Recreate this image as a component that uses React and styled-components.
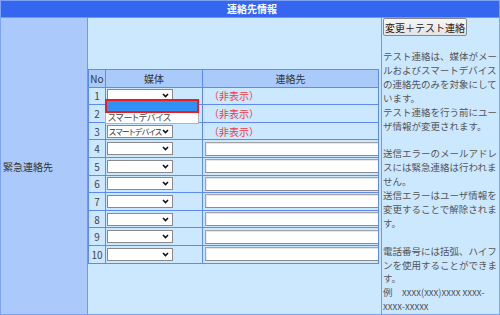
import React from 'react'
import styled, { createGlobalStyle } from 'styled-components'

const GlobalStyle = createGlobalStyle`
	html, body {
		margin: 0;
		padding: 0;
		background: #ffffff;
	}
	body {
		font-family: 'Noto Sans CJK JP', 'Noto Sans', sans-serif;
		font-size: 10px;
	}
`

const rows = [
	{ no: 1, media: '', hidden: true },
	{ no: 2, media: '', hidden: true },
	{ no: 3, media: 'スマートデバイス', hidden: true },
	{ no: 4 },
	{ no: 5 },
	{ no: 6 },
	{ no: 7 },
	{ no: 8 },
	{ no: 9 },
	{ no: 10 },
]

const notes = [
	'テスト連絡は、媒体がメールおよびスマートデバイスの連絡先のみを対象にしています。',
	'テスト連絡を行う前にユーザ情報が変更されます。',
	null,
	'送信エラーのメールアドレスには緊急連絡は行われません。',
	'送信エラーはユーザ情報を変更することで解除されます。',
	null,
	'電話番号には括弧、ハイフンを使用することができます。',
	'例　xxxx(xxx)xxxx xxxx-xxxx-xxxxx',
]

const Chevron = () => (
	<ChevronIcon width="7" height="5" viewBox="0 0 7 5">
		<polyline points="1,1 3.5,3.5 6,1" fill="none" stroke="#111" strokeWidth="1.6" />
	</ChevronIcon>
)

const App = () => {
	return (
		<>
			<GlobalStyle />
			<Frame>
				<Title>連絡先情報</Title>
				<Label>緊急連絡先</Label>
				<Middle>
					<TableWrap>
						<ContactTable>
							<colgroup>
								<col style={{ width: 17 }} />
								<col style={{ width: 97 }} />
								<col />
							</colgroup>
							<thead>
								<tr>
									<Th>No</Th>
									<Th>媒体</Th>
									<Th>連絡先</Th>
								</tr>
							</thead>
							<tbody>
								{rows.map((row) => (
									<tr key={`contact-row-${row.no}`}>
										<NoCell>{row.no}</NoCell>
										<Td>
											<SelectBox>
												<SelectText>{row.media}</SelectText>
												<Chevron />
											</SelectBox>
										</Td>
										<Td>
											{row.hidden ? (
												<Hidden>（非表示）</Hidden>
											) : (
												<TextInput type="text" readOnly />
											)}
										</Td>
									</tr>
								))}
							</tbody>
						</ContactTable>
						<DropList>
							<Option $active />
							<Option>スマートデバイス</Option>
						</DropList>
					</TableWrap>
				</Middle>
				<Side>
					<Button>変更＋テスト連絡</Button>
					<Notes>
						{notes.map((note, key) =>
							note ? <p key={`note-${key}`}>{note}</p> : <Gap key={`note-${key}`} />
						)}
					</Notes>
				</Side>
			</Frame>
		</>
	)
}

const Frame = styled.div`
	width: 500px;
	height: 315px;
	box-sizing: border-box;
	display: grid;
	grid-template-columns: 86px 293px 1fr;
	grid-template-rows: 16px 1fr;
	gap: 1px;
	border: 1px solid #7ea3f6;
	background: #6f98f5;
`

const Title = styled.div`
	grid-column: 1 / 4;
	background: #3466f0;
	color: #ffffff;
	font-weight: bold;
	font-size: 10px;
	line-height: 16px;
	text-align: center;
	padding-left: 4px;
`

const Label = styled.div`
	background: #abc9fa;
	color: #333333;
	font-size: 10px;
	display: flex;
	align-items: center;
	padding-left: 2px;
`

const Middle = styled.div`
	background: #cce8ff;
	display: flex;
	align-items: center;
`

const TableWrap = styled.div`
	position: relative;
	width: 291px;
`

const ContactTable = styled.table`
	width: 100%;
	border-collapse: collapse;
	table-layout: fixed;
	border: 1px solid #5d8bf3;

	tr {
		height: 17.6px;
	}

	thead tr {
		height: 18px;
	}
`

const Th = styled.th`
	background: #aacbfa;
	color: #333333;
	font-weight: normal;
	font-size: 10px;
	border: 1px solid #5d8bf3;
	padding: 0;
	text-align: center;
`

const Td = styled.td`
	border: 1px solid #5d8bf3;
	padding: 0 0 0 1px;
	background: #cce8ff;
`

const NoCell = styled(Td)`
	text-align: center;
	color: #444444;
	padding: 0;
`

const SelectBox = styled.div`
	width: 66px;
	height: 13px;
	box-sizing: border-box;
	background: #ffffff;
	border: 1px solid #8a8a8a;
	display: flex;
	align-items: center;
	gap: 1px;
	padding: 0 3px 0 1px;
	color: #333333;
	line-height: 11px;
	white-space: nowrap;
`

const SelectText = styled.span`
	flex: 1 1 auto;
	min-width: 0;
	font-size: 8px;
	font-feature-settings: 'palt';
	letter-spacing: -0.6px;
`

const ChevronIcon = styled.svg`
	flex-shrink: 0;
`

const TextInput = styled.input`
	display: block;
	width: 174px;
	height: 14px;
	box-sizing: border-box;
	margin: 0 0 0 1px;
	border: 1px solid #a3a3a3;
	border-bottom-color: #8c8c8c;
	box-shadow: inset 1px 1px 0 #e6e6e6;
	background: #ffffff;
	padding: 0;
`

const Hidden = styled.span`
	color: #f03a3a;
	font-size: 10px;
	padding-left: 5px;
`

const DropList = styled.div`
	position: absolute;
	left: 17px;
	top: 30px;
	width: 94px;
	background: #ffffff;
`

const Option = styled.div`
	box-sizing: border-box;
	height: ${(p) => (p.$active ? '14px' : '11px')};
	background: ${(p) => (p.$active ? '#3090f5' : '#ffffff')};
	border: ${(p) => (p.$active ? '2.5px solid #ee1c1c' : '1px solid #b5b5b5')};
	border-top: ${(p) => (p.$active ? '2.5px solid #ee1c1c' : 'none')};
	color: #444444;
	font-size: 9px;
	font-feature-settings: 'palt';
	letter-spacing: -0.2px;
	line-height: 10px;
	padding-left: 2px;
	white-space: nowrap;
`

const Side = styled.div`
	background: #cce8ff;
	padding: 0 0 0 1px;
	color: #555555;
	font-size: 9.5px;
	line-height: 13.9px;
`

const Button = styled.button`
	display: block;
	margin: 0;
	height: 18px;
	width: 84px;
	padding: 0;
	font-family: inherit;
	font-size: 10px;
	color: #222222;
	background: linear-gradient(#f6f6f6, #e4e4e4);
	border: 1px solid #8a8a8a;
	border-radius: 2px;
`

const Notes = styled.div`
	margin-top: 14px;

	p {
		margin: 0;
	}
`

const Gap = styled.div`
	height: 13.9px;
`

export default App
